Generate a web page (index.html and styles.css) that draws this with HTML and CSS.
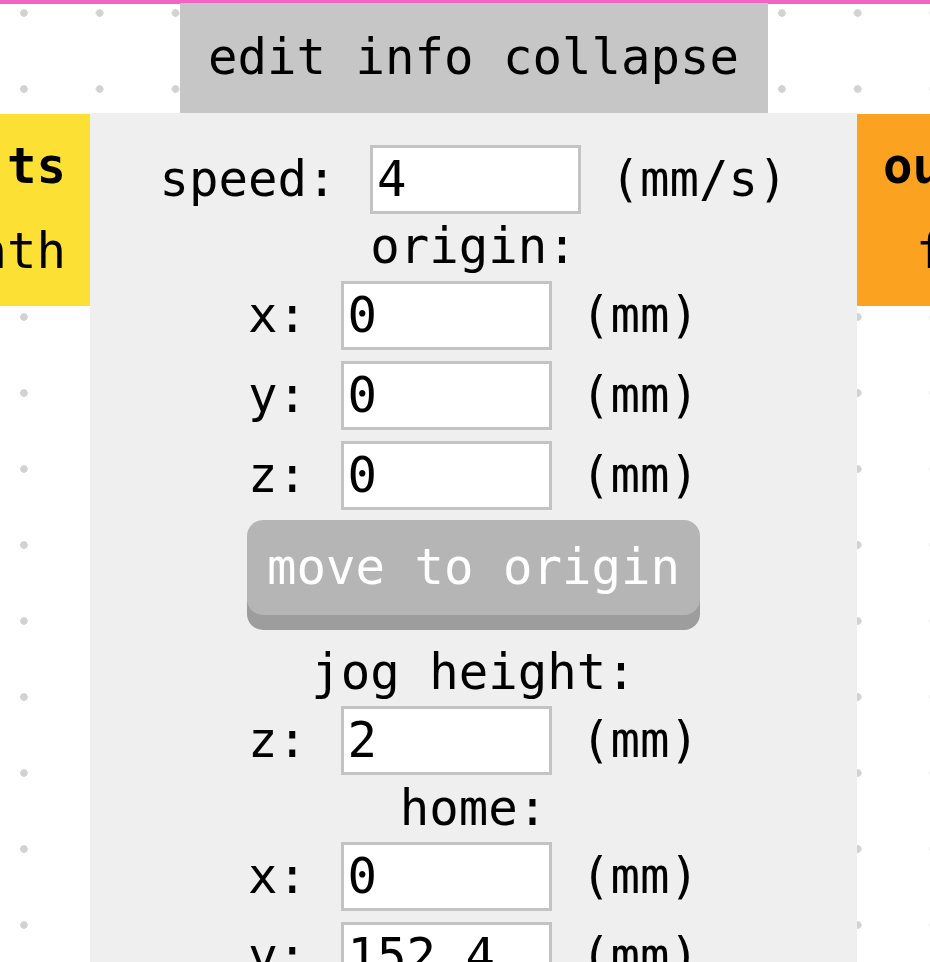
FILE: index.html
```html
<!DOCTYPE html>
<html lang="en">
<head>
  <meta charset="UTF-8" />
  <meta name="viewport" content="width=device-width, initial-scale=1.0"/>
  <title>machine settings</title>
  <link rel="stylesheet" href="styles.css">
</head>
<body>
  <div class="topline"></div>

  <!-- neighbouring modules on the canvas -->
  <div class="module inputs">
    <div class="title">ts</div>
    <div class="line">nth</div>
  </div>
  <div class="module outputs">
    <div class="title">ou</div>
    <div class="line">f</div>
  </div>

  <div class="window">
    <div class="tab">edit info collapse</div>
    <div class="panel">
      <div class="row"><span class="label">speed:</span><input type="text" value="4"><span class="unit">(mm/s)</span></div>
      <div class="heading">origin:</div>
      <div class="row"><span class="label">x:</span><input type="text" value="0"><span class="unit">(mm)</span></div>
      <div class="row"><span class="label">y:</span><input type="text" value="0"><span class="unit">(mm)</span></div>
      <div class="row"><span class="label">z:</span><input type="text" value="0"><span class="unit">(mm)</span></div>
      <div class="button-row"><button>move to origin</button></div>
      <div class="heading">jog height:</div>
      <div class="row"><span class="label">z:</span><input type="text" value="2"><span class="unit">(mm)</span></div>
      <div class="heading">home:</div>
      <div class="row"><span class="label">x:</span><input type="text" value="0"><span class="unit">(mm)</span></div>
      <div class="row"><span class="label">y:</span><input type="text" value="152.4"><span class="unit">(mm)</span></div>
    </div>
  </div>
</body>
</html>
```

FILE: styles.css
```css
body {
  margin: 0;
  height: 962px;
  overflow: hidden;
  position: relative;
  font-family: "DejaVu Sans Mono", "Liberation Mono", monospace;
  font-size: 49px;
  color: #000;
  background-color: #fff;
  background-image: radial-gradient(circle, #d2d2d2 3.5px, transparent 4px);
  background-size: 75.8px 76px;
  background-position: -14px -25px;
}

.topline {
  position: absolute;
  top: 0; left: 0; right: 0;
  height: 4px;
  background: #f264c4;
}

/* modules sit on the free canvas */
.module {
  position: absolute;
  top: 114px;
  height: 192px;
  overflow: hidden;
  padding-top: 10px;
  box-sizing: border-box;
}
.module .title, .module .line { line-height: 85px; white-space: nowrap; }
.module .title { font-weight: bold; }

.inputs {
  left: -90px;
  width: 180px;
  background: #fde034;
  text-align: right;
  padding-right: 24px;
}
.outputs {
  left: 857px;
  width: 120px;
  background: #fba320;
  padding-left: 26px;
}
.outputs .line { padding-left: 33px; }

.window {
  position: absolute;
  left: 90px;
  top: 3px;
  width: 767px;
}
.tab {
  width: 588px;
  height: 110px;
  line-height: 110px;
  margin: 0 auto;
  text-align: center;
  background: #c6c6c6;
  white-space: pre;
}
.panel {
  background: #efefef;
  padding-top: 26px;
  height: 900px;
  display: flex;
  flex-direction: column;
}

.row {
  height: 80px;
  display: flex;
  justify-content: center;
  align-items: center;
  gap: 29.5px;
}
.row .label { margin-right: 4px; }
.row input {
  width: 211px;
  height: 69px;
  box-sizing: border-box;
  margin: 0;
  padding: 0 4px;
  border: 3px solid #c3c3c3;
  background: #fff;
  color: #000;
  font: inherit;
  outline: none;
}

.heading {
  height: 56px;
  line-height: 56px;
  text-align: center;
}

.button-row {
  display: flex;
  justify-content: center;
  padding: 4.5px 0 30px;
}
.button-row button {
  width: 453px;
  height: 95px;
  border: none;
  border-radius: 16px;
  background: #b5b5b5;
  color: #fff;
  font: inherit;
  padding: 0;
  box-shadow: 0 15px 0 #9d9d9d;
}
```
